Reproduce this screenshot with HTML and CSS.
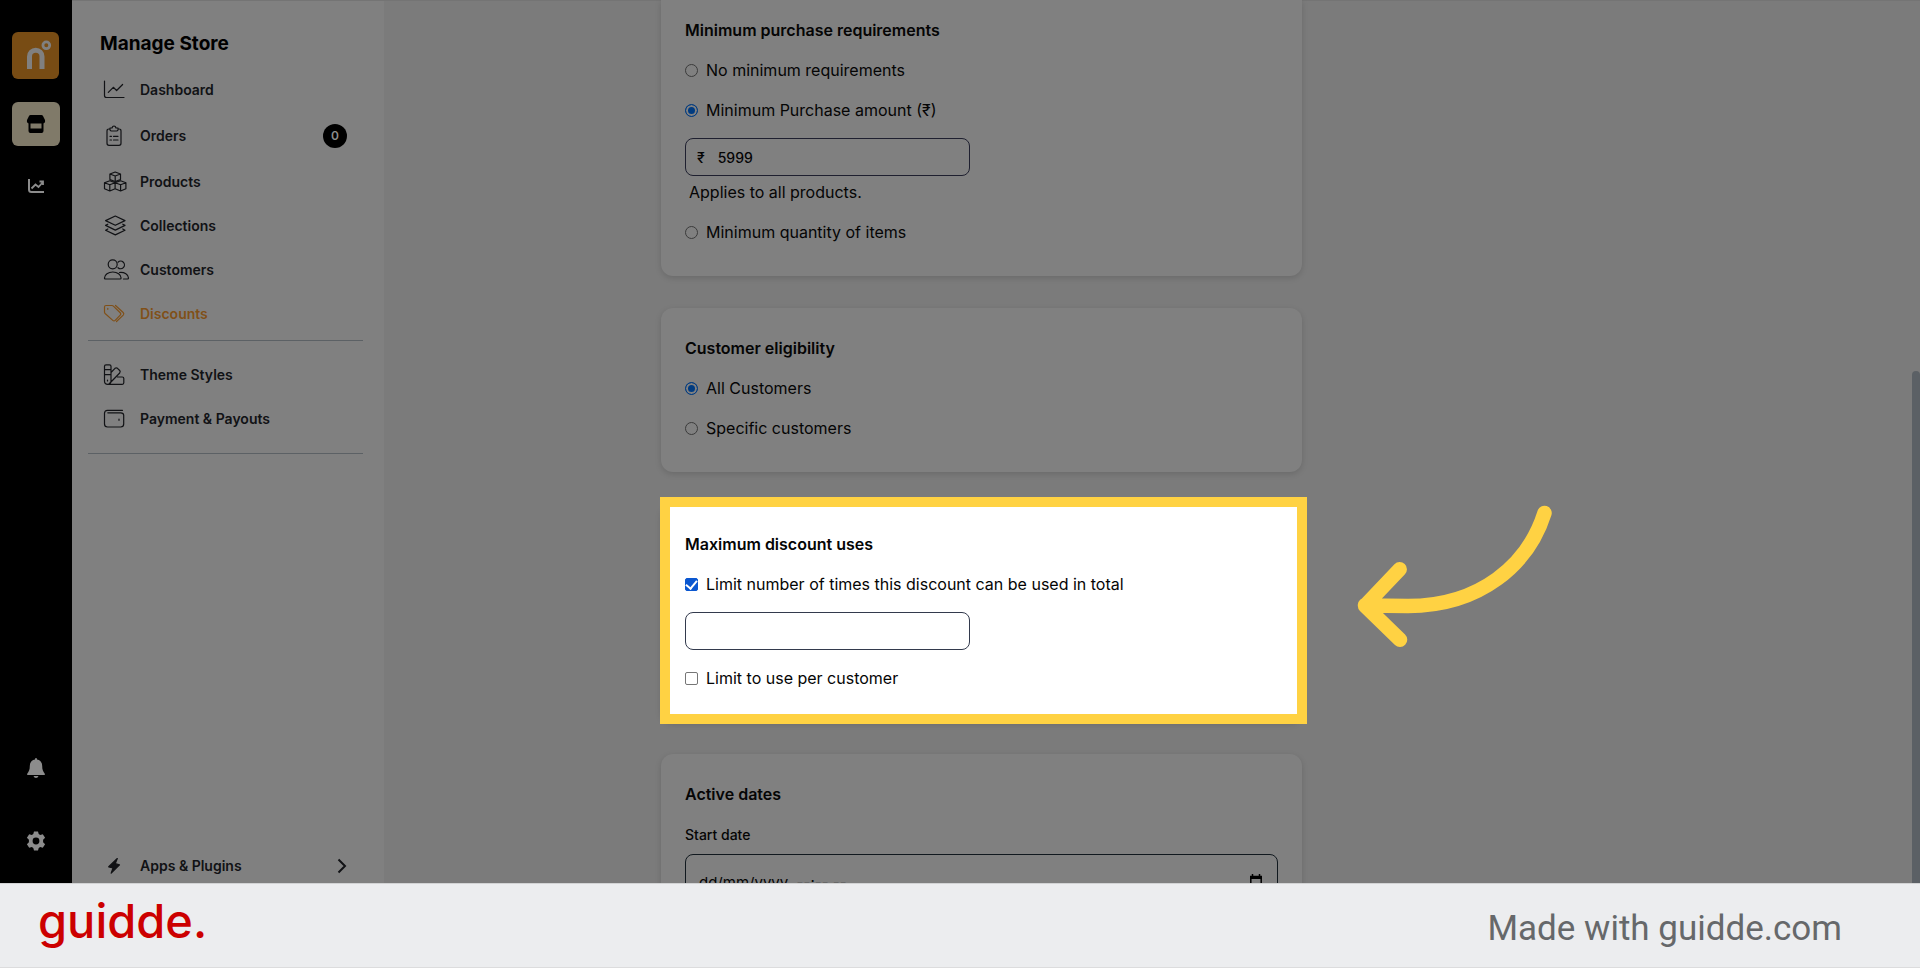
FILE: index.html
```html
<!DOCTYPE html>
<html lang="en">
<head>
<meta charset="utf-8">
<title>Manage Store - Discounts</title>
<link rel="stylesheet" href="styles.css">
</head>
<body>
<div class="app">
  <nav class="rail" aria-label="Main">
    <a class="rail-logo" href="#" aria-label="Home">
      <svg viewBox="0 0 47 47"><path d="M17.500 37V24.500a6.200 6.200 0 0 1 12.500 0V37" fill="none" stroke="#808080" stroke-width="5"/><circle cx="34.300" cy="13.300" r="3.400" fill="none" stroke="#808080" stroke-width="2.800"/></svg>
    </a>
    <a class="rail-link rail-link-active" href="#" aria-label="Store">
      <svg viewBox="0 0 20 20"><path d="M4.500 1h11q1 0 1.500.9l2 4.100q.6 3-2 3.500H3Q.4 9 1 6l2-4.100Q3.500 1 4.500 1z"/><path d="M3.500 8v9q0 1 1 1h11q1 0 1-1V8" fill="none" stroke="#000" stroke-width="2"/><path d="M4 14.500h12V19H4z"/></svg>
    </a>
    <a class="rail-link" href="#" aria-label="Analytics">
      <svg viewBox="0 0 20 20" fill="none" stroke="#8c8c8c" stroke-width="2"><path d="M3 3v10.500Q3 16 5.500 16H18"/><path d="M5.500 12.500l4-4 3 2.500L17 6M13.500 5.500H17V9" stroke-width="1.800"/></svg>
    </a>
    <a class="rail-link rail-bottom" href="#" aria-label="Notifications">
      <svg viewBox="0 0 20 20" fill="#8c8c8c"><path d="M10 0q1 0 1 1.400c3.500.6 5.200 3.300 5.200 6.600 0 3.700.8 5.200 2.600 7.800V17H1.200v-1.200C3 13.200 3.800 11.700 3.800 8c0-3.300 1.700-6 5.200-6.600Q9 0 10 0zM7.500 18h5q-.6 2-2.500 2t-2.500-2z"/></svg>
    </a>
    <a class="rail-link" href="#" aria-label="Settings">
      <svg viewBox="0 0 20 20"><path fill="#8c8c8c" fill-rule="evenodd" d="M8 .5h4l.7 2.600 1.500.9 2.600-.8 2.300 3.600-2 1.900v2.600l2 1.900-2.300 3.600-2.600-.8-1.500.9-.7 2.600H8l-.7-2.600-1.500-.9-2.600.8L.9 13.200l2-1.900V8.700l-2-1.900 2.300-3.600 2.600.8 1.500-.9zM10 6.600a3.400 3.400 0 1 0 0 6.800 3.400 3.400 0 0 0 0-6.800z"/></svg>
    </a>
  </nav>

  <aside class="sidebar">
    <h1 class="sidebar-title">Manage Store</h1>
    <a class="nav-item" href="#"><svg class="nav-icon" viewBox="0 0 28 24"><path d="M1.500 3v14.500q0 2 2 2H21M5.300 14.300l5-5 3.300 3.200 6-6"/></svg>Dashboard</a>
    <a class="nav-item nav-item-tall" href="#"><svg class="nav-icon" viewBox="0 0 28 24"><path d="M7 5H6Q4 5 4 7v12.300q0 2 2 2h10q2 0 2-2V7q0-2-2-2h-1M7 6V4h2q.5-2 2-2t2 2h2v2q-.5 1-1.500 1h-5Q7.500 7 7 6zM7 12.300h1.500M10.500 12.300H15M7 16h1.500M10.500 16H15"/></svg>Orders<span class="badge">0</span></a>
    <a class="nav-item" href="#"><svg class="nav-icon" viewBox="0 0 28 24"><path d="M12.200 2l5.300 2v5.500l-5.300 2-5.300-2V4zM6.900 4l5.300 2 5.300-2M12.200 6v5M6.800 10.700l5.300 2v6l-5.300 2.300-5.300-2.300v-6zM1.500 12.700l5.300 2 5.300-2M6.800 14.700V21M17.600 10.700l5.300 2v6L17.600 21l-5.500-2.300v-6zM12.100 12.700l5.500 2 5.300-2M17.600 14.700V21"/></svg>Products</a>
    <a class="nav-item" href="#"><svg class="nav-icon" viewBox="0 0 28 24"><path d="M12.300 2L22 6.600l-9.700 4.700-9.700-4.700zM4.800 10.200l-2.200 1.200 9.700 4.700 9.700-4.700-2.200-1.200M4.800 15l-2.200 1.200 9.700 4.700 9.700-4.700-2.200-1.200"/></svg>Collections</a>
    <a class="nav-item" href="#"><svg class="nav-icon" viewBox="0 0 28 24"><circle cx="9.700" cy="6.300" r="4.500"/><path d="M15 4.200a3.800 3.800 0 1 1 0 5.500M2.500 21q-1 0-1-1c0-3.500 3.800-6 8.300-6s8.300 2.500 8.300 6q0 1-1 1zM16.500 14.500c5-.5 9 2 9 5.500q0 1-1 1h-4"/></svg>Customers</a>
    <a class="nav-item nav-item-active" href="#" aria-current="page"><svg class="nav-icon" viewBox="0 0 28 24"><path d="M3 3.500h6q.8 0 1.400.6l6.800 6.700q1.200 1.200 0 2.400l-5 5.200q-1.200 1-2.400 0L2.100 11.500q-.6-.6-.6-1.200V5q0-1.500 1.500-1.500zM12.500 3.500l7.700 7q1.200 1.300 0 2.600L13.500 19.500M4.800 6.300v1"/></svg>Discounts</a>
    <hr class="divider">
    <a class="nav-item" href="#"><svg class="nav-icon" viewBox="0 0 28 24"><path d="M3 1.800h3.500q1.500 0 1.500 1.500v15q-.5 3-3.300 3-3.200 0-3.200-3v-15q0-1.500 1.500-1.500zM1.500 6.700H8M1.500 11.700H8M4.500 17v1M8 9.500l4-4.200q1.300-1 2.500 0l2.200 2.200q1 1.200 0 2.500L6.500 20.500M14.500 14h4.800q1.500 0 1.500 1.500v4.300q0 1.500-1.500 1.500H4.800"/></svg>Theme Styles</a>
    <a class="nav-item" href="#"><svg class="nav-icon" viewBox="0 0 28 24"><path d="M19.500 3.300h-15q-3 0-3 3V17q0 3 3 3h13.200q3 0 3-3V8.300q0-2.500-3-2.500H4.800M16 12v1.300"/></svg>Payment &amp; Payouts</a>
    <hr class="divider divider-low">
    <a class="nav-item nav-item-bottom" href="#"><svg class="nav-icon" viewBox="0 0 28 24"><path class="bolt" d="M14.300 4.500l-8.600 8.300 4.300 1.100-1.800 5.300 8.300-8.300-4.300-1.200z"/></svg>Apps &amp; Plugins<svg class="chevron" viewBox="0 0 10 16"><path d="M1.500 1.500L8 8l-6.500 6.500"/></svg></a>
  </aside>

  <main class="main">
    <form class="cards">
      <section class="card card-first">
        <h2 class="card-title">Minimum purchase requirements</h2>
        <label class="option"><input class="radio" type="radio" name="minimum">No minimum requirements</label>
        <label class="option"><input class="radio" type="radio" name="minimum" checked>Minimum Purchase amount (₹)</label>
        <div class="field field-amount"><label for="amount">₹</label><input class="field-input" id="amount" type="text" value="5999"></div>
        <p class="note">Applies to all products.</p>
        <label class="option"><input class="radio" type="radio" name="minimum">Minimum quantity of items</label>
      </section>

      <section class="card">
        <h2 class="card-title">Customer eligibility</h2>
        <label class="option"><input class="radio" type="radio" name="eligibility" checked>All Customers</label>
        <label class="option"><input class="radio" type="radio" name="eligibility">Specific customers</label>
      </section>

      <section class="card card-focus">
        <h2 class="card-title">Maximum discount uses</h2>
        <label class="option"><input class="check" type="checkbox" checked>Limit number of times this discount can be used in total</label>
        <div class="field field-limit"><input class="field-input" type="text" aria-label="Total number of uses"></div>
        <label class="option"><input class="check" type="checkbox">Limit to use per customer</label>
        <svg class="arrow" viewBox="56 24 198 146" aria-hidden="true"><path d="M99.700 89.300L65 125.700l35 34M244.500 33C228 85 180 126 108 126q-22 0-43-1"/></svg>
      </section>

      <section class="card">
        <h2 class="card-title">Active dates</h2>
        <label class="date-label" for="start">Start date</label>
        <div class="field field-date"><input class="field-input" id="start" type="text" value="dd/mm/yyyy  --:-- --"><button class="date-button" type="button" aria-label="Choose a date"><svg viewBox="0 0 14 16"><path d="M1.800 2.500h10.400V14H1.800z"/><path d="M1 3.500h12" stroke-width="3"/><path d="M3.500 0v3M10.500 0v3"/></svg></button></div>
      </section>
    </form>
    <div class="scroll-thumb"></div>
  </main>
</div>

<footer class="footer">
  <a class="brand" href="#">guidde.</a>
  <span class="credit">Made with guidde.com</span>
</footer>
</body>
</html>
```
FILE: styles.css
```css
* { box-sizing: border-box; }

body {
  margin: 0;
  height: 100vh;
  display: flex;
  flex-direction: column;
  overflow: hidden;
  background: #7b7b7b;
  color: #050505;
  font-family: Inter, "Liberation Sans", sans-serif;
  font-size: 16px;
}

a { color: inherit; text-decoration: none; }

.app {
  flex: 1;
  min-height: 0;
  display: flex;
  overflow: hidden;
}

/* Icon rail */
.rail {
  flex: none;
  width: 72px;
  padding: 32px 12px 22px;
  display: flex;
  flex-direction: column;
  background: #000;
}

.rail-logo {
  height: 47px;
  width: 47px;
  margin-bottom: 23px;
  border-radius: 6px;
  background: #784c14;
}

.rail-logo svg { display: block; }

.rail-link {
  height: 40px;
  display: flex;
  align-items: center;
  justify-content: center;
}

.rail-link svg { width: 20px; height: 20px; }

.rail-link-active {
  height: 44px;
  margin-bottom: 20px;
  border-radius: 6px;
  background: #807a69;
}

.rail-bottom { margin-top: auto; margin-bottom: 33px; }

/* Sidebar */
.sidebar {
  flex: none;
  width: 312px;
  padding: 32px 21px 0 16px;
  display: flex;
  flex-direction: column;
  background: #808080;
  color: #111215;
  box-shadow: inset 0 1px #747474;
}

.sidebar-title {
  margin: 0 0 12px;
  padding-left: 12px;
  color: #000;
  font-size: 19px;
  line-height: 24px;
  font-weight: 700;
}

.nav-item {
  height: 44px;
  padding: 0 16px 0 15px;
  display: flex;
  align-items: center;
  gap: 9px;
  font-size: 14px;
  line-height: 16px;
  font-weight: 600;
}

.nav-item-tall { height: 48px; }
.nav-item-active { color: #805018; }
.nav-item-bottom { height: 34px; margin-top: auto; }

.nav-icon {
  flex: none;
  width: 28px;
  height: 24px;
  overflow: visible;
  fill: none;
  stroke: currentColor;
  stroke-width: 1.2;
  stroke-linejoin: round;
  stroke-linecap: round;
}

.bolt { fill: currentColor; }

.badge {
  width: 24px;
  height: 24px;
  margin-left: auto;
  border-radius: 50%;
  background: #000;
  color: #8c8c8c;
  font-size: 12px;
  line-height: 24px;
  text-align: center;
}

.chevron {
  width: 10px;
  height: 16px;
  margin-left: auto;
  fill: none;
  stroke: currentColor;
  stroke-width: 2;
}

.divider {
  width: 100%;
  height: 1px;
  margin: 4px 0 12px;
  border: 0;
  background: #5c6165;
}

.divider-low { margin-top: 12px; }

/* Content */
.main {
  position: relative;
  flex: 1;
  min-width: 0;
  overflow: hidden;
  display: grid;
  grid-template-columns: 277fr 641fr 618fr;
  box-shadow: inset 0 1px #747474;
}

.cards {
  grid-column: 2;
  display: flex;
  flex-direction: column;
  gap: 32px;
}

.card {
  position: relative;
  padding: 28px 24px 24px;
  border-radius: 12px;
  background: #808080;
  box-shadow: 0 2px 6px rgba(0, 0, 0, 0.14);
}

.card-first {
  padding-top: 18px;
  border-radius: 0 0 12px 12px;
}

.card-title {
  margin: 0 0 8px;
  font-size: 16px;
  line-height: 24px;
  font-weight: 600;
}

.option {
  height: 40px;
  display: flex;
  align-items: center;
  gap: 8px;
}

.radio,
.check {
  appearance: none;
  flex: none;
  width: 13px;
  height: 13px;
  margin: 0;
  border: 1px solid #3b3b3b;
}

.radio { border-radius: 50%; }

.radio:checked {
  border-color: #003b80;
  background: #003b80;
  box-shadow: inset 0 0 0 2px #808080;
}

.check {
  border-color: #767676;
  border-radius: 2px;
}

.check:checked {
  display: grid;
  place-content: center;
  border-color: #0b57d0;
  background: #0b57d0;
}

.check:checked::before {
  content: "";
  width: 5px;
  height: 9px;
  margin-bottom: 2px;
  border: solid #fff;
  border-width: 0 2px 2px 0;
  transform: rotate(40deg);
}

.field {
  display: flex;
  align-items: center;
  height: 38px;
  width: 285px;
  padding: 0 11px;
  border: 1px solid #1f2030;
  border-radius: 8px;
  font-size: 14px;
  font-weight: 500;
}

.field-input {
  flex: 1;
  min-width: 0;
  padding: 0;
  border: 0;
  outline: 0;
  background: transparent;
  color: inherit;
  font: inherit;
  white-space: pre;
}

.field-amount { gap: 13px; margin-top: 8px; }

.note {
  margin: 4px 0 8px;
  padding-left: 4px;
  line-height: 24px;
}

.card-focus { background: #fff; }

/* Callout frame around the focused card */
.card-focus::after {
  content: "";
  position: absolute;
  inset: -7px -5px -2px -1px;
  border: 10px solid #ffd243;
  pointer-events: none;
}

.field-limit { margin: 8px 0; border-color: #333a4d; }

.arrow {
  position: absolute;
  top: 0;
  left: 100%;
  width: 198px;
  margin-left: 54px;
  fill: none;
  stroke: #ffd243;
  stroke-width: 14.500;
  stroke-linecap: round;
  stroke-linejoin: round;
}

.date-label {
  display: block;
  margin-top: 19px;
  font-size: 14px;
  line-height: 20px;
  font-weight: 500;
}

.field-date {
  width: 100%;
  height: 56px;
  margin-top: 9px;
  padding: 0 14px 0 13px;
  border-color: #11191f;
}

.field-date .field-input {
  font-size: 15px;
  font-weight: 400;
}

.date-button {
  width: 14px;
  height: 16px;
  padding: 0;
  border: 0;
  background: none;
}

.date-button svg {
  display: block;
  fill: none;
  stroke: #000;
  stroke-width: 1.500;
}

.scroll-thumb {
  position: absolute;
  top: 42%;
  right: 0;
  bottom: 0;
  width: 8px;
  border-radius: 4px 4px 0 0;
  background: #5b6065;
}

/* Footer */
.footer {
  flex: none;
  height: 85px;
  padding: 0 78px 0 38px;
  display: flex;
  align-items: center;
  justify-content: space-between;
  border-top: 1px solid #d2d3d4;
  border-bottom: 1px solid #dcdcdd;
  background: #ecedef;
}

.brand {
  padding-bottom: 10px;
  color: #c00;
  font-family: Inter, sans-serif;
  font-size: 47px;
  line-height: 60px;
  font-weight: 500;
}

.credit {
  padding-top: 6px;
  color: #66686a;
  font-family: Roboto, sans-serif;
  font-size: 35px;
  line-height: 44px;
}
```
